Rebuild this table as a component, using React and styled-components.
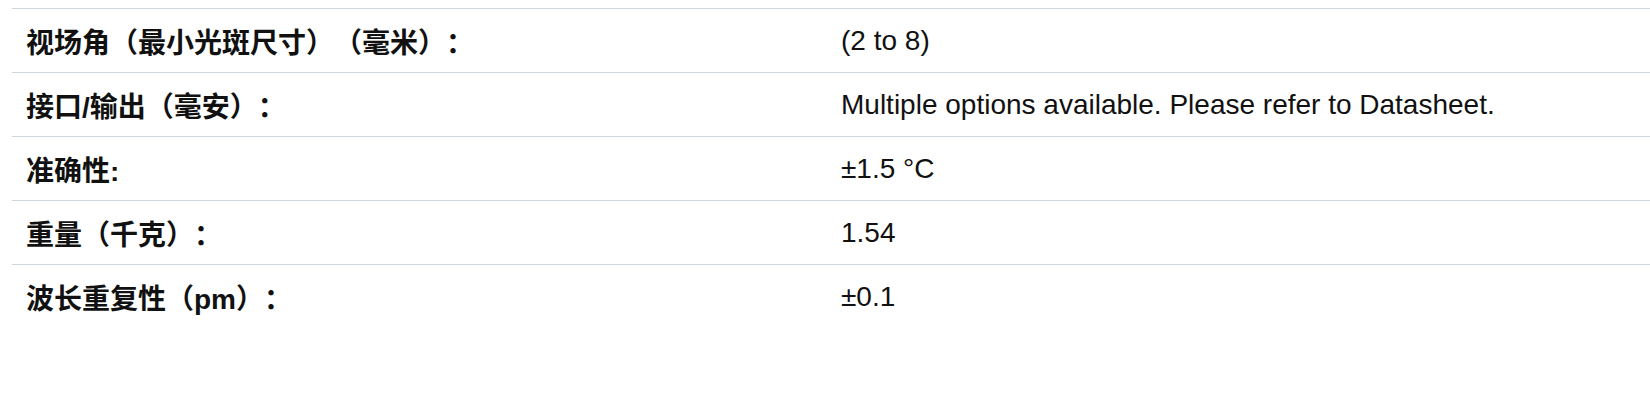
import React from 'react'
import styled, { createGlobalStyle } from 'styled-components'

const GlobalStyle = createGlobalStyle`
  html, body {
    margin: 0;
    padding: 0;
    background: #fff;
  }
  body {
    font-family: 'Liberation Sans', Arial, 'Noto Sans CJK SC', sans-serif;
    color: #111;
  }
`

const Wrapper = styled.div`
  padding: 8px 0 0 12px;
`

const SpecTable = styled.div`
  display: grid;
  grid-template-columns: 816px 1fr;
  border-top: 1px solid #cdd7e2;
`

const Row = styled.div`
  display: contents;

  & > div {
    border-bottom: ${(p) => (p.last ? 'none' : '1px solid #cdd7e2')};
  }
`

const Label = styled.div`
  height: 63px;
  display: flex;
  align-items: center;
  padding-left: 14px;
  font-family: 'Liberation Sans', Arial, 'Noto Sans CJK SC', sans-serif;
  font-weight: 700;
  font-size: 28px;
  color: #111;
  white-space: nowrap;
  text-spacing-trim: space-all;
  font-feature-settings: 'halt' 0, 'chws' 0;
`

const Value = styled.div`
  height: 63px;
  display: flex;
  align-items: center;
  padding-left: 13px;
  font-size: 28px;
  color: #111;
  white-space: nowrap;
`

const specs = [
  ['视场角（最小光斑尺寸）（毫米）：', '(2 to 8)'],
  ['接口/输出（毫安）：', 'Multiple options available. Please refer to Datasheet.'],
  ['准确性:', '±1.5 °C'],
  ['重量（千克）：', '1.54'],
  ['波长重复性（pm）：', '±0.1'],
]

const App = () => (
  <Wrapper>
    <GlobalStyle />
    <SpecTable>
      {specs.map(([label, value], i) => (
        <Row key={label} last={i === specs.length - 1}>
          <Label>{label}</Label>
          <Value>{value}</Value>
        </Row>
      ))}
    </SpecTable>
  </Wrapper>
)

export default App
